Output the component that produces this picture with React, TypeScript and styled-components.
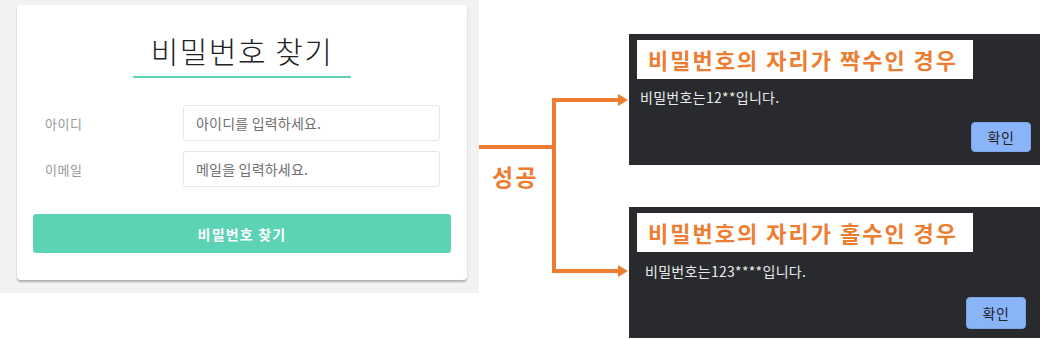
import styled, { createGlobalStyle } from 'styled-components';

const GlobalStyle = createGlobalStyle`
  body {
    margin: 0;
    background: #ffffff;
    font-family: 'Noto Sans CJK KR', 'Noto Sans', sans-serif;
  }
`;

const ORANGE = '#ed7d31';

interface DialogProps {
  heading: string;
  message: string;
  msgLeft: number;
  msgTop: number;
  btnTop: number;
  btnRight: number;
  btnHeight: number;
}

function ResultDialog({ heading, message, msgLeft, msgTop, btnTop, btnRight, btnHeight }: DialogProps) {
  return (
    <Dialog>
      <Heading>{heading}</Heading>
      <Message $left={msgLeft} $top={msgTop}>
        {message}
      </Message>
      <DialogFooter $top={btnTop} $right={btnRight}>
        <OkButton $height={btnHeight}>확인</OkButton>
      </DialogFooter>
    </Dialog>
  );
}

function Connector() {
  return (
    <ConnectorArea>
      <svg width="150" height="339" viewBox="0 0 150 339">
        <g fill="none" stroke={ORANGE} strokeWidth="4">
          <line x1="0" y1="147" x2="77" y2="147" />
          <line x1="75" y1="98" x2="75" y2="273" />
          <line x1="73" y1="100" x2="140" y2="100" />
          <line x1="73" y1="271" x2="140" y2="271" />
        </g>
        <polygon points="139,94 149,100 139,106" fill={ORANGE} />
        <polygon points="139,265 149,271 139,277" fill={ORANGE} />
      </svg>
      <SuccessLabel>성공</SuccessLabel>
    </ConnectorArea>
  );
}

function App() {
  return (
    <>
      <GlobalStyle />
      <Page>
        <LeftPanel>
          <Card>
            <TitleWrap>
              <Title>비밀번호 찾기</Title>
            </TitleWrap>
            <Form>
              <FieldRow>
                <Label>아이디</Label>
                <Input placeholder="아이디를 입력하세요." />
              </FieldRow>
              <FieldRow>
                <Label>이메일</Label>
                <Input placeholder="메일을 입력하세요." />
              </FieldRow>
            </Form>
            <SubmitButton>비밀번호 찾기</SubmitButton>
          </Card>
        </LeftPanel>
        <Connector />
        <DialogColumn>
          <ResultDialog
            heading="비밀번호의 자리가 짝수인 경우"
            message="비밀번호는12**입니다."
            msgLeft={11}
            msgTop={8}
            btnTop={15}
            btnRight={9}
            btnHeight={30}
          />
          <ResultDialog
            heading="비밀번호의 자리가 홀수인 경우"
            message="비밀번호는123****입니다."
            msgLeft={16}
            msgTop={9}
            btnTop={16}
            btnRight={14}
            btnHeight={32}
          />
        </DialogColumn>
      </Page>
    </>
  );
}

export default App;

const Page = styled.div`
  display: flex;
  align-items: flex-start;
  width: 1040px;
  height: 339px;
  overflow: hidden;
`;

const LeftPanel = styled.div`
  width: 479px;
  height: 293px;
  box-sizing: border-box;
  padding: 5px 12px 13px 17px;
  background: #f2f2f2;
`;

const Card = styled.div`
  height: 275px;
  box-sizing: border-box;
  background: #ffffff;
  border-radius: 4px;
  box-shadow: 0 2px 2px rgba(0, 0, 0, 0.28);
  padding: 25px 16px 0 16px;
  display: flex;
  flex-direction: column;
`;

const TitleWrap = styled.div`
  display: flex;
  justify-content: center;
`;

const Title = styled.h1`
  margin: 0;
  width: 218px;
  padding-bottom: 6px;
  border-bottom: 2px solid #5cd3b5;
  text-align: center;
  font-size: 30px;
  line-height: 40px;
  font-weight: 300;
  color: #222222;
  letter-spacing: 1.5px;
`;

const Form = styled.div`
  display: flex;
  flex-direction: column;
  gap: 10px;
  margin-top: 27px;
  padding: 0 11px 0 12px;
`;

const FieldRow = styled.div`
  display: flex;
  align-items: center;
`;

const Label = styled.span`
  width: 138px;
  font-size: 13px;
  color: #999999;
  letter-spacing: 0.5px;
`;

const Input = styled.input`
  width: 257px;
  height: 36px;
  box-sizing: border-box;
  border: 1px solid #e6e6e6;
  border-radius: 3px;
  padding: 0 12px;
  font-family: inherit;
  font-size: 14px;
  letter-spacing: 0.2px;
  outline: none;
  &::placeholder {
    color: #6f6f6f;
  }
`;

const SubmitButton = styled.button`
  margin-top: 27px;
  height: 39px;
  border: none;
  border-radius: 3px;
  background: #5cd3b5;
  color: #ffffff;
  font-family: inherit;
  font-size: 14px;
  font-weight: 700;
  letter-spacing: 1.2px;
`;

const ConnectorArea = styled.div`
  position: relative;
  width: 150px;
  height: 339px;
  svg {
    display: block;
  }
`;

const SuccessLabel = styled.span`
  position: absolute;
  left: 13px;
  top: 159px;
  font-size: 23px;
  font-weight: 700;
  letter-spacing: 2px;
  color: ${ORANGE};
`;

const DialogColumn = styled.div`
  display: flex;
  flex-direction: column;
  gap: 42px;
  padding-top: 34px;
  width: 411px;
`;

const Dialog = styled.div`
  height: 131px;
  background: #292a2d;
  display: flex;
  flex-direction: column;
  padding: 6px 0 0 8px;
  box-sizing: border-box;
`;

const Heading = styled.div`
  width: 336px;
  height: 39px;
  box-sizing: border-box;
  padding-left: 11px;
  background: #ffffff;
  color: ${ORANGE};
  font-size: 22px;
  font-weight: 700;
  line-height: 39px;
  letter-spacing: 2px;
  white-space: nowrap;
`;

const Message = styled.div<{ $left: number; $top: number }>`
  margin-top: ${({ $top }) => $top}px;
  padding-left: ${({ $left }) => $left - 8}px;
  font-size: 14px;
  line-height: 20px;
  letter-spacing: 0.3px;
  color: #e8eaed;
`;

const DialogFooter = styled.div<{ $top: number; $right: number }>`
  display: flex;
  justify-content: flex-end;
  margin-top: ${({ $top }) => $top}px;
  padding-right: ${({ $right }) => $right}px;
`;

const OkButton = styled.button<{ $height: number }>`
  width: 60px;
  height: ${({ $height }) => $height}px;
  border: 1px solid #7aa5ea;
  border-radius: 4px;
  background: #8ab4f8;
  color: #202124;
  font-family: inherit;
  font-size: 14px;
  letter-spacing: 0.5px;
`;
